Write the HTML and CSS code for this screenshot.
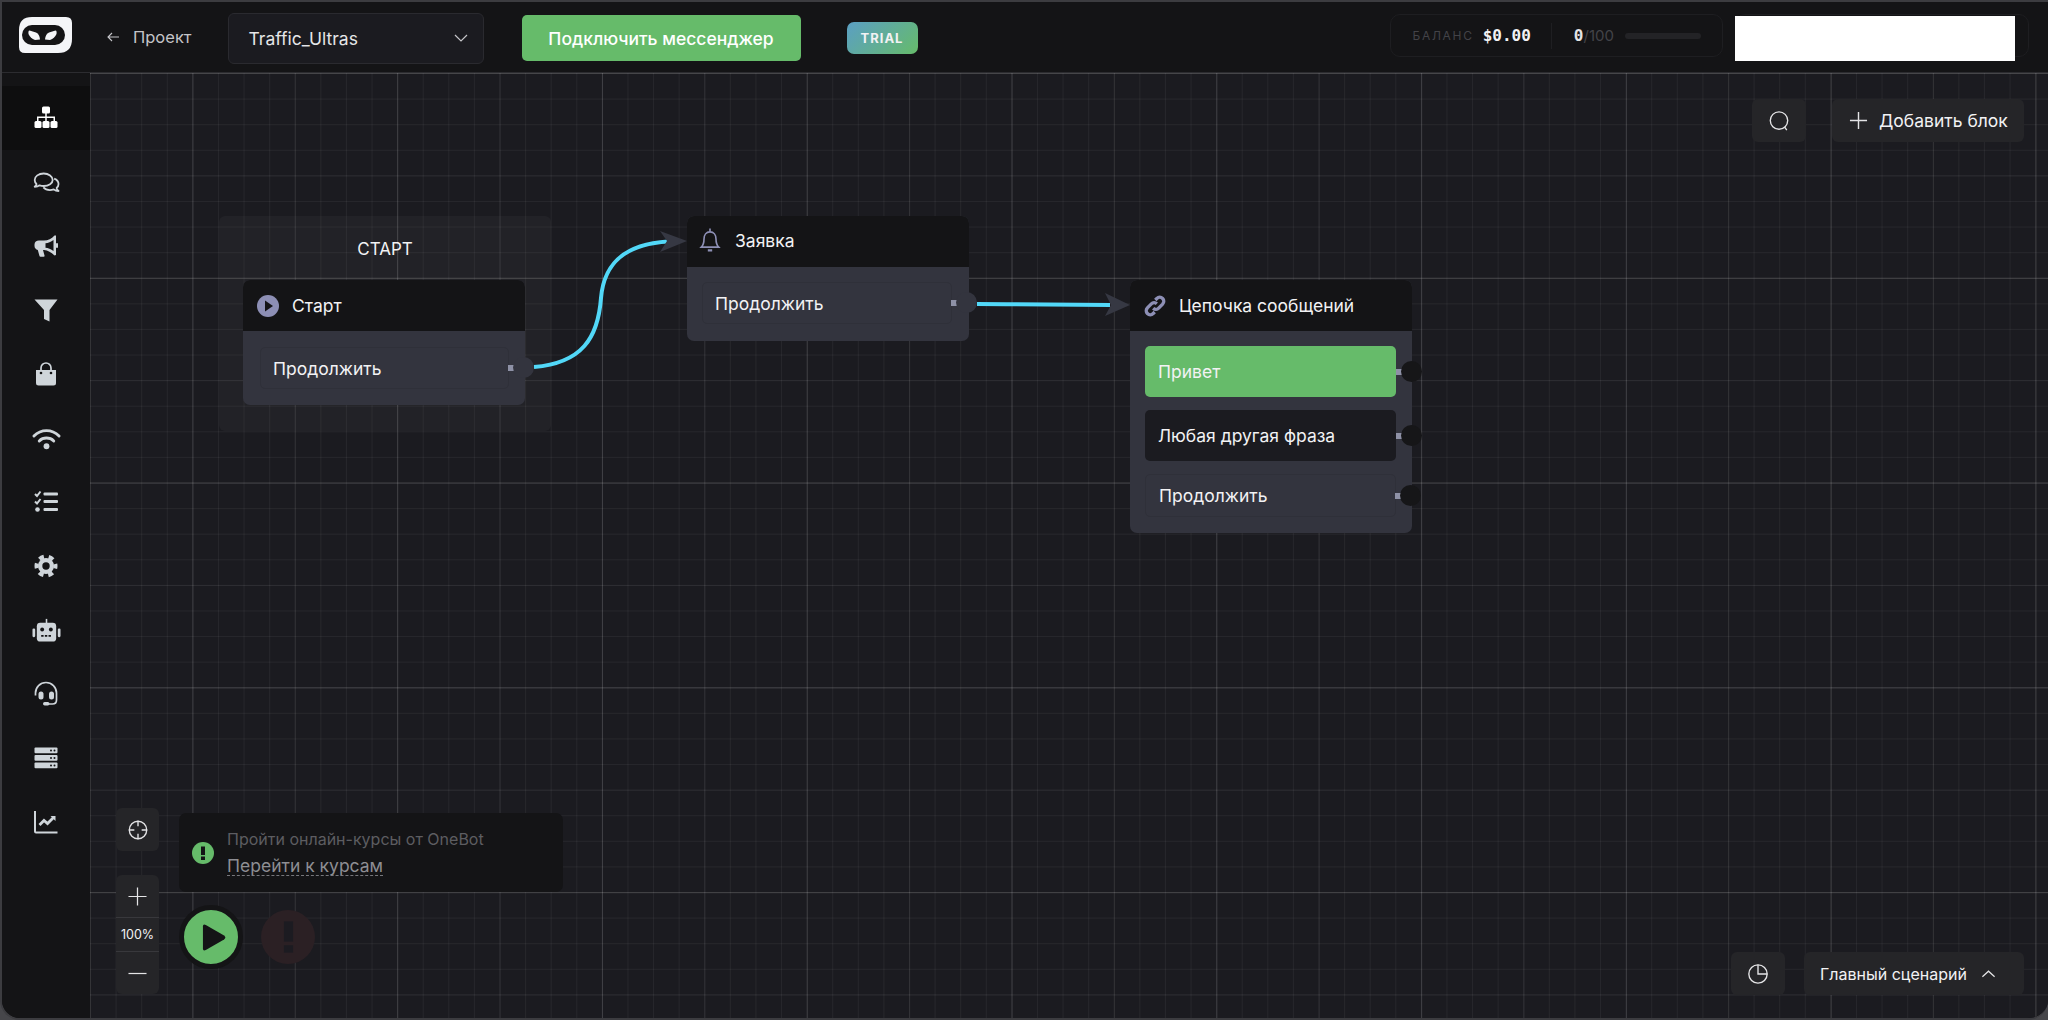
FILE: index.html
```html
<!DOCTYPE html>
<html lang="ru">
<head>
  <meta charset="UTF-8">
  <title>OneBot: Traffic_Ultras</title>
  <link rel="stylesheet" href="styles.css">
</head>
<body>
<div class="app">
  <header class="topbar">
    <svg class="logo" viewBox="0 0 53 36">
      <path fill="#f4f5f8" d="M13 0H47Q53 0 53 6V22Q53 36 39 36H6Q0 36 0 30V13Q0 0 13 0Z"/>
      <rect x="3" y="8" width="43" height="20" rx="10" fill="#141416"/>
      <path fill="#f4f5f8" d="M10.500 13.500L17 15.500Q20.500 17 21 22.500L16 23Q11.500 21.500 9.500 17Q9 13.500 10.500 13.500Z"/>
      <path fill="#f4f5f8" d="M36.500 13.500L30 15.500Q26.500 17 26 22.500L31 23Q35.500 21.500 37.500 17Q38 13.500 36.500 13.500Z"/>
    </svg>
    <a class="back">
      <svg class="back-arrow" viewBox="0 0 16 16"><path d="M14 8H3M7 4L3 8L7 12"/></svg>
      Проект
    </a>
    <div class="select">
      <span>Traffic_Ultras</span>
      <svg class="select-arrow" viewBox="0 0 16 10"><path d="M2 2L8 8L14 2"/></svg>
    </div>
    <button class="connect">Подключить мессенджер</button>
    <span class="trial">TRIAL</span>
    <div class="balance">
      <span class="balance-label">БАЛАНС</span>
      <span class="balance-value">$0.00</span>
      <span class="balance-divider"></span>
      <span class="limit"><b>0</b>/100</span>
      <span class="limit-bar"></span>
    </div>
    <div class="account"><div class="account-mask"></div></div>
  </header>

  <div class="main">
    <nav class="sidebar">
      <a class="nav-item active">
        <svg viewBox="0 0 24 24" fill="currentColor">
          <rect x="8" y="0.500" width="8" height="7" rx="1.500"/>
          <rect x="0.500" y="15" width="7" height="7" rx="1.500"/><rect x="8.500" y="15" width="7" height="7" rx="1.500"/><rect x="16.500" y="15" width="7" height="7" rx="1.500"/>
          <path d="M11.250 7h1.500v3.500H21v4.500h-1.500v-3H12.750v3h-1.500v-3H4.500v3H3v-4.500h8.250z"/>
        </svg>
      </a>
      <a class="nav-item">
        <svg class="icon-wide" viewBox="0 0 24 24" fill="none" stroke="currentColor" stroke-width="1.600" stroke-linejoin="round">
          <path d="M9.500 4C5 4 1.500 6.500 1.500 9.800c0 1.400.6 2.600 1.700 3.600-.3 1-1 1.800-1.700 2.400 1.800 0 3.300-.5 4.400-1.300 1.100.4 2.300.6 3.600.6 4.500 0 8-2.400 8-5.300S14 4 9.500 4z"/>
          <path d="M18.800 8.500c2.300.9 3.900 2.700 3.900 4.800 0 1.400-.6 2.600-1.700 3.500.2 1.100.8 2.100 1.700 2.800-1.700 0-3.200-.6-4.300-1.500-1.100.4-2.200.6-3.400.6-2.400 0-4.500-.9-5.800-2.300"/>
        </svg>
      </a>
      <a class="nav-item">
        <svg viewBox="0 0 24 24" fill="currentColor">
          <path d="M22 1.500V21l-1.500.500C17 18 14 16.500 10 16H9l1.500 5.500a1 1 0 0 1-1 1.300H6.500a1 1 0 0 1-1-.7L3.800 16C2 15.500.5 14 .5 12V10.500C.5 8 2.500 6.500 5 6.500h5c4 0 7.500-1.500 10.500-5zM19.500 6C17 8 14 9 11.500 9.300v4.500c2.500.3 5.500 1.300 8 3.300z"/>
          <rect x="22" y="9" width="2" height="5" rx="1"/>
        </svg>
      </a>
      <a class="nav-item">
        <svg viewBox="0 0 24 24" fill="currentColor"><path d="M0.500 1.500H23.500L15.500 12V23.500L10 21V12Z"/></svg>
      </a>
      <a class="nav-item">
        <svg viewBox="0 0 24 24" fill="currentColor">
          <path d="M2 8H22V21Q22 23.500 19.500 23.500H4.500Q2 23.500 2 21Z"/>
          <path d="M7 11V6a5 5 0 0 1 10 0V11" fill="none" stroke="currentColor" stroke-width="1.700"/>
          <circle cx="7" cy="11" r="1.300" fill="#141416"/><circle cx="17" cy="11" r="1.300" fill="#141416"/>
        </svg>
      </a>
      <a class="nav-item">
        <svg class="icon-wide" viewBox="0 0 30 24" fill="none" stroke="currentColor" stroke-width="3" stroke-linecap="round">
          <path d="M2 9.500C9.500 2 20.500 2 28 9.500"/>
          <path d="M7.500 14.500C11.500 10.500 18.500 10.500 22.500 14.500"/>
          <circle cx="15" cy="20" r="3" fill="currentColor" stroke="none"/>
        </svg>
      </a>
      <a class="nav-item">
        <svg viewBox="0 0 24 24" fill="currentColor">
          <path d="M1 4L3 6L6.500 1.500" fill="none" stroke="currentColor" stroke-width="2"/>
          <path d="M1 11.500L3 13.500L6.500 9" fill="none" stroke="currentColor" stroke-width="2"/>
          <circle cx="3.500" cy="19.500" r="2.300"/>
          <rect x="9.500" y="2.500" width="14.500" height="3" rx="1"/><rect x="9.500" y="10" width="14.500" height="3" rx="1"/><rect x="9.500" y="18" width="14.500" height="3" rx="1"/>
        </svg>
      </a>
      <a class="nav-item">
        <svg viewBox="0 0 24 24">
          <circle cx="12" cy="12" r="8" fill="currentColor"/>
          <circle cx="12" cy="12" r="9.500" fill="none" stroke="currentColor" stroke-width="4" stroke-dasharray="5 4.950" stroke-dashoffset="2.500"/>
          <circle cx="12" cy="12" r="3.700" fill="#141416"/>
        </svg>
      </a>
      <a class="nav-item">
        <svg class="icon-wide" viewBox="0 0 30 24" fill="currentColor">
          <rect x="14.200" y="0" width="1.600" height="5"/>
          <rect x="5" y="4" width="20" height="19.500" rx="3.500"/>
          <rect x="0.500" y="10" width="2.800" height="9" rx="1.200"/><rect x="26.700" y="10" width="2.800" height="9" rx="1.200"/>
          <circle cx="10.500" cy="11" r="2" fill="#141416"/><circle cx="19.500" cy="11" r="2" fill="#141416"/>
          <path d="M9.500 17.500H20.500" stroke="#141416" stroke-width="1.800" stroke-dasharray="2.500 1.300" fill="none"/>
        </svg>
      </a>
      <a class="nav-item">
        <svg viewBox="0 0 24 24">
          <path d="M1.500 13.500V11a10.500 10.500 0 0 1 21 0V18Q22.500 22 18.500 22H13" fill="none" stroke="currentColor" stroke-width="1.700"/>
          <rect x="4.500" y="9.500" width="5" height="8" rx="2.500" fill="currentColor"/><rect x="15" y="9.500" width="5" height="8" rx="2.500" fill="currentColor"/>
          <rect x="9" y="20" width="6.500" height="3.500" rx="1.700" fill="currentColor"/>
        </svg>
      </a>
      <a class="nav-item">
        <svg viewBox="0 0 24 24" fill="currentColor">
          <rect x="0.500" y="1.500" width="23" height="5.800" rx="1"/><rect x="0.500" y="9" width="23" height="5.800" rx="1"/><rect x="0.500" y="16.500" width="23" height="5.800" rx="1"/>
          <g fill="#141416">
            <circle cx="17" cy="4.400" r="1"/><circle cx="20.500" cy="4.400" r="1"/>
            <circle cx="17" cy="11.900" r="1"/><circle cx="20.500" cy="11.900" r="1"/>
            <circle cx="17" cy="19.400" r="1"/><circle cx="20.500" cy="19.400" r="1"/>
          </g>
        </svg>
      </a>
      <a class="nav-item">
        <svg viewBox="0 0 24 24" fill="none" stroke="currentColor">
          <path d="M1 1V21.500Q1 22.500 2 22.500H23.500" stroke-width="2"/>
          <path d="M5.500 15L10 10.500L13.500 13.500L20 7" stroke-width="2.800"/>
          <path d="M16.500 6H21.500V11Z" fill="currentColor" stroke="none"/>
        </svg>
      </a>
    </nav>

    <section class="canvas">
      <div class="group"><span class="group-title">СТАРТ</span></div>

      <svg class="wires" viewBox="0 0 1958 945">
        <path class="wire" d="M444 294C492 290 508 265 511 225C514 190 535 171 578 168.500"/>
        <path class="wire" d="M887 231C930 231 970 232 1020 232"/>
        <path class="arrow" d="M597 168L570 158L577 168L570 179Z"/>
        <path class="arrow" d="M1040 232L1015 220L1021 232L1015 243Z"/>
      </svg>

      <div class="node node-start">
        <div class="node-head">
          <svg class="node-icon" viewBox="0 0 22 22"><circle cx="11" cy="11" r="11" fill="#8d8fb5"/><path d="M8 5.500L16 11L8 16.500Z" fill="#141416"/></svg>
          Старт
        </div>
        <div class="node-body">
          <div class="row row-outline">Продолжить<i class="port"></i></div>
        </div>
      </div>

      <div class="node node-request">
        <div class="node-head">
          <svg class="node-icon" viewBox="2 1 18 22" fill="none" stroke="#8d8fb5" stroke-width="1.500">
            <path d="M3 18.500H19C17 16.500 16.500 14 16.500 11C16.500 7.500 14.500 4.500 11 4.500C7.500 4.500 5.500 7.500 5.500 11C5.500 14 5 16.500 3 18.500Z"/>
            <path d="M11 1.500V4.500"/><path d="M9 21.500H13" stroke-width="2.200"/>
          </svg>
          Заявка
        </div>
        <div class="node-body">
          <div class="row row-outline">Продолжить<i class="port"></i></div>
        </div>
      </div>

      <div class="node node-chain">
        <div class="node-head">
          <svg class="node-icon" viewBox="0 0 24 24" fill="none" stroke="#8d8fb5" stroke-width="3.600">
            <path d="M10 14.500C11.800 16.200 14.300 16 16 14.300L20.300 10C22 8.200 22 5.600 20.300 3.800C18.500 2 15.800 2 14 3.800L12.300 5.500"/>
            <path d="M14 9.500C12.200 7.800 9.700 8 8 9.700L3.700 14C2 15.800 2 18.400 3.700 20.200C5.500 22 8.200 22 10 20.200L11.700 18.500"/>
          </svg>
          Цепочка сообщений
        </div>
        <div class="node-body node-body-list">
          <div class="row row-green">Привет<i class="port port-dark"></i></div>
          <div class="row row-dark">Любая другая фраза<i class="port port-dark"></i></div>
          <div class="row row-outline">Продолжить<i class="port port-dark"></i></div>
        </div>
      </div>

      <div class="tools-top">
        <button class="tool tool-square tool-search">
          <svg viewBox="0 0 24 24" fill="none" stroke="#e4e4e6" stroke-width="1.500"><circle cx="12" cy="11.500" r="9.500"/><path d="M18 18.500L20.500 22"/></svg>
        </button>
        <button class="tool tool-add">
          <svg viewBox="0 0 20 20" fill="none" stroke="#e4e4e6" stroke-width="1.500"><path d="M10 1V19M1 10H19"/></svg>
          Добавить блок
        </button>
      </div>

      <div class="zoom-tools">
        <button class="tool tool-square">
          <svg viewBox="0 0 24 24" fill="none" stroke="#e4e4e6" stroke-width="1.500"><circle cx="12" cy="12" r="9.500"/><path d="M12 2V8M12 16V22M2 12H8M16 12H22"/></svg>
        </button>
        <div class="zoom-box">
          <button class="zoom-step"><svg viewBox="0 0 20 20" fill="none" stroke="#e4e4e6" stroke-width="1.300"><path d="M10 0.500V19.500M0.500 10H19.500"/></svg></button>
          <span class="zoom-value">100%</span>
          <button class="zoom-step"><svg viewBox="0 0 20 20" fill="none" stroke="#e4e4e6" stroke-width="1.300"><path d="M0.500 10H19.500"/></svg></button>
        </div>
      </div>

      <div class="toast">
        <span class="toast-icon">
          <svg viewBox="0 0 22 22"><circle cx="11" cy="11" r="11" fill="#66bb6a"/><rect x="9" y="4.500" width="4" height="8.500" fill="#141416"/><rect x="9" y="14.500" width="4" height="3.500" fill="#141416"/></svg>
        </span>
        <div class="toast-text">
          <div class="toast-title">Пройти онлайн-курсы от OneBot</div>
          <a class="toast-link">Перейти к курсам</a>
        </div>
      </div>

      <button class="run">
        <svg viewBox="0 0 26 30"><path d="M2 3.500Q2 0.500 5 2L24 13Q26.500 15 24 17L5 28Q2 29.500 2 26.500Z" fill="#141416"/></svg>
      </button>
      <span class="errors">
        <svg viewBox="0 0 12 34"><rect x="1" y="0" width="10" height="22" fill="#1c1b21"/><rect x="1" y="26" width="10" height="8" fill="#1c1b21"/></svg>
      </span>

      <div class="tools-bottom">
        <button class="tool tool-square">
          <svg viewBox="0 0 24 24" fill="none" stroke="#e4e4e6" stroke-width="1.500"><circle cx="12" cy="12" r="10"/><path d="M12 2V12H22"/></svg>
        </button>
        <button class="tool tool-scenario">
          Главный сценарий
          <svg viewBox="0 0 16 10" fill="none" stroke="#e4e4e6" stroke-width="1.300"><path d="M1.500 8L8 2L14.500 8"/></svg>
        </button>
      </div>
    </section>
  </div>
</div>
</body>
</html>
```

FILE: styles.css
```css
* {
  box-sizing: border-box;
}
html, body {
  margin: 0;
  height: 100%;
  background: #46464a;
}
body {
  font-family: Inter, "Noto Sans", sans-serif;
  font-size: 17.500px;
  color: #f2f2f4;
  overflow: hidden;
}
button {
  font: inherit;
  color: inherit;
  border: none;
  padding: 0;
  cursor: pointer;
}
.app {
  height: 1020px;
  display: flex;
  flex-direction: column;
  border-top: 2px solid #3c3c40;
  border-left: 2px solid #3c3c40;
  border-bottom: 2px solid #3c3c40;
  border-bottom-left-radius: 20px;
  border-bottom-right-radius: 20px;
  overflow: hidden;
  background: #141416;
}

/* top bar */
.topbar {
  height: 71px;
  flex: none;
  display: flex;
  align-items: center;
  background: #141416;
  border-bottom: 1px solid #2c2c30;
  padding-left: 17px;
  position: relative;
}
.logo {
  width: 53px;
  height: 36px;
  flex: none;
  margin-top: -4px;
}
.back {
  display: flex;
  align-items: center;
  gap: 12px;
  margin-left: 33px;
  font-size: 16.500px;
  color: #c4c4c8;
  margin-top: -1px;
}
.back-arrow {
  width: 16px;
  height: 16px;
  fill: none;
  stroke: #c4c4c8;
  stroke-width: 1.100;
}
.select {
  width: 256px;
  height: 51px;
  margin-left: 36px;
  margin-top: 2px;
  display: flex;
  align-items: center;
  justify-content: space-between;
  padding: 0 14px 0 20px;
  background: #1b1b20;
  border: 1px solid #2a2a2f;
  border-radius: 6px;
  font-size: 17.500px;
  color: #e6e6e8;
}
.select-arrow {
  width: 16px;
  height: 10px;
  fill: none;
  stroke: #c4c4c8;
  stroke-width: 1.200;
}
.connect {
  width: 279px;
  height: 46px;
  margin-left: 38px;
  margin-top: 2px;
  background: #66bb6a;
  border-radius: 5px;
  font-weight: 500;
  font-size: 17.500px;
  color: #fff;
}
.trial {
  width: 71px;
  height: 32px;
  margin-left: 46px;
  margin-top: 2px;
  display: flex;
  align-items: center;
  justify-content: center;
  border-radius: 7px;
  background: linear-gradient(135deg, #5b9fc4, #66bb6a);
  font-size: 13px;
  font-weight: 700;
  letter-spacing: 1px;
}
.balance {
  width: 333px;
  height: 43px;
  margin-left: 472px;
  margin-top: -3px;
  display: flex;
  align-items: center;
  padding-left: 22px;
  border: 1px solid #1e1e21;
  border-radius: 10px;
}
.balance-label {
  font-size: 12px;
  letter-spacing: 1.700px;
  color: #434348;
}
.balance-value, .limit b {
  font-family: "DejaVu Sans Mono", monospace;
  font-weight: 700;
}
.balance-value {
  font-size: 16px;
  margin-left: 9px;
}
.balance-divider {
  width: 1px;
  height: 26px;
  background: #1f1f22;
  margin-left: 20px;
}
.limit {
  margin-left: 22px;
  font-size: 15px;
  color: #434348;
}
.limit b {
  color: #e4e4e6;
  font-size: 16px;
}
.limit-bar {
  width: 76px;
  height: 6px;
  margin-left: 11px;
  border-radius: 3px;
  background: #232326;
}
.account {
  width: 294px;
  height: 43px;
  margin-left: 12px;
  margin-top: -3px;
  border: 1px solid #1e1e21;
  border-radius: 10px;
  position: relative;
}
.account-mask {
  position: absolute;
  left: -1px;
  top: 1px;
  width: 280px;
  height: 45px;
  background: #fff;
}

.main {
  flex: 1;
  display: flex;
  min-height: 0;
}

/* left menu */
.sidebar {
  width: 88px;
  flex: none;
  display: flex;
  flex-direction: column;
  padding-top: 13px;
  background: #141416;
}
.nav-item {
  height: 64px;
  flex: none;
  display: flex;
  align-items: center;
  justify-content: center;
  color: #cfd5da;
}
.nav-item svg {
  width: 24px;
  height: 24px;
  overflow: visible;
}
.nav-item svg.icon-wide {
  width: 29px;
  height: 27px;
}
.nav-item.active {
  background: #0e0e0f;
  color: #fff;
}

/* canvas */
.canvas {
  flex: 1;
  position: relative;
  overflow: hidden;
  background-color: #1b1b20;
  background-image:
    linear-gradient(rgba(255, 255, 255, 0.11) 1px, transparent 1px),
    linear-gradient(90deg, rgba(255, 255, 255, 0.07) 1px, transparent 1px),
    linear-gradient(rgba(255, 255, 255, 0.04) 1px, transparent 1px),
    linear-gradient(90deg, rgba(255, 255, 255, 0.06) 1px, transparent 1px),
    linear-gradient(rgba(255, 255, 255, 0.05) 1px, transparent 1px),
    linear-gradient(90deg, rgba(255, 255, 255, 0.05) 1px, transparent 1px);
  background-size:
    100% 204.800px,
    204.800px 100%,
    100% 102.400px,
    102.400px 100%,
    100% 25.600px,
    25.600px 100%;
  background-position:
    0 0,
    102.400px 0,
    0 0,
    0 0,
    0 0,
    0 0;
}
.group {
  position: absolute;
  left: 129px;
  top: 143px;
  width: 332px;
  height: 215px;
  padding-top: 22px;
  text-align: center;
  background: rgba(255, 255, 255, 0.032);
  border-radius: 6px;
}
.group-title {
  font-size: 17px;
}
.wires {
  position: absolute;
  left: 0;
  top: 0;
  width: 1958px;
  height: 945px;
}
.wire {
  fill: none;
  stroke: #52d8f8;
  stroke-width: 4;
}
.arrow {
  fill: #363843;
}
.node {
  position: absolute;
  width: 282px;
  border-radius: 7px;
  background: #33343e;
}
.node-start {
  left: 153px;
  top: 207px;
}
.node-request {
  left: 597px;
  top: 143px;
}
.node-chain {
  left: 1040px;
  top: 207px;
}
.node-head {
  height: 51px;
  display: flex;
  align-items: center;
  gap: 13px;
  padding-left: 14px;
  background: #141416;
  border-radius: 7px 7px 0 0;
}
.node-request .node-head {
  gap: 14px;
  padding-left: 12px;
  padding-bottom: 3px;
}
.node-icon {
  width: 22px;
  height: 22px;
  flex: none;
}
.node-request .node-icon {
  height: 24px;
}
.node-body {
  padding: 16px 16px 16px 17px;
}
.node-request .node-body {
  padding: 15px 17px 17px 15px;
}
.node-body-list {
  display: flex;
  flex-direction: column;
  gap: 13px;
  padding: 15px 16px 16px 15px;
}
.row {
  position: relative;
  height: 51px;
  display: flex;
  align-items: center;
  padding-left: 13px;
  border-radius: 5px;
}
.row-outline {
  height: 42px;
  border: 1px solid #2f3039;
  padding-left: 12px;
}
.node-body-list .row-outline {
  height: 43px;
  padding-left: 13px;
}
.row-green {
  background: #66bb6a;
}
.row-dark {
  background: #1b1b20;
}
.port {
  position: absolute;
  right: -6px;
  top: 50%;
  width: 6px;
  height: 6px;
  margin-top: -3px;
  background: #8e91a6;
}
.port::after {
  content: "";
  position: absolute;
  left: 5px;
  top: -8px;
  width: 21px;
  height: 21px;
  border-radius: 50%;
  background: #33343e;
}
.port-dark::after {
  background: #161618;
}

/* floating tools */
.tool {
  display: flex;
  align-items: center;
  height: 43px;
  background: #252528;
  border-radius: 6px;
  color: #f2f2f4;
}
.tool-square {
  width: 54px;
  justify-content: center;
}
.tool svg {
  width: 22px;
  height: 22px;
  flex: none;
}
.tools-top {
  position: absolute;
  right: 24px;
  top: 26px;
  display: flex;
  gap: 26px;
}
.tool-add {
  width: 192px;
  padding-left: 17px;
  gap: 11px;
}
.tool-add svg {
  width: 19px;
  height: 19px;
}
.tools-bottom {
  position: absolute;
  right: 24px;
  top: 879px;
  display: flex;
  gap: 19px;
  font-size: 16px;
}
.tool-scenario {
  width: 220px;
  padding-left: 16px;
  gap: 14px;
}
.tool-scenario svg {
  width: 15px;
  height: 10px;
}
.zoom-tools {
  position: absolute;
  left: 26px;
  top: 735px;
  width: 43px;
  display: flex;
  flex-direction: column;
  gap: 24px;
}
.zoom-tools .tool-square {
  width: 43px;
}
.zoom-box {
  height: 119px;
  display: flex;
  flex-direction: column;
  background: #252528;
  border-radius: 6px;
}
.zoom-step {
  height: 42px;
  flex: none;
  display: flex;
  align-items: center;
  justify-content: center;
  background: none;
}
.zoom-step svg {
  width: 19px;
  height: 19px;
}
.zoom-value {
  height: 35px;
  flex: none;
  border-top: 1px solid #38383c;
  border-bottom: 1px solid #38383c;
  display: flex;
  align-items: center;
  justify-content: center;
  font-size: 12.500px;
}
.toast {
  position: absolute;
  left: 89px;
  top: 740px;
  width: 384px;
  height: 79px;
  display: flex;
  align-items: center;
  gap: 13px;
  padding-left: 13px;
  background: #141416;
  border-radius: 7px;
}
.toast-icon {
  width: 22px;
  height: 22px;
  flex: none;
}
.toast-text {
  display: flex;
  flex-direction: column;
  align-items: flex-start;
  gap: 7px;
  line-height: 20px;
}
.toast-title {
  color: #5d5d61;
  font-size: 16px;
}
.toast-link {
  color: #8e8e93;
  border-bottom: 1px dashed #77777c;
  line-height: 19px;
}
.run {
  position: absolute;
  left: 89px;
  top: 832px;
  width: 64px;
  height: 64px;
  display: flex;
  align-items: center;
  justify-content: center;
  background: #66bb6a;
  border: 5px solid #141416;
  border-radius: 50%;
}
.run svg {
  width: 25px;
  height: 29px;
  margin-left: 5px;
}
.errors {
  position: absolute;
  left: 171px;
  top: 837px;
  width: 54px;
  height: 54px;
  display: flex;
  align-items: center;
  justify-content: center;
  background: #2b2024;
  border-radius: 50%;
}
.errors svg {
  width: 11px;
  height: 34px;
}
```
